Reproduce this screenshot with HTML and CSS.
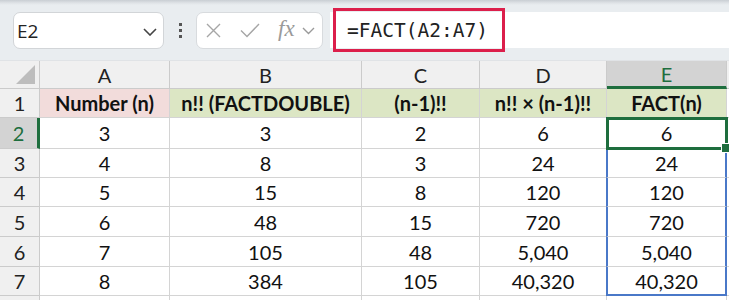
FILE: index.html
```html
<!DOCTYPE html>
<html>
<head>
  <meta charset="utf-8">
  <title>FACT</title>
  <link rel="stylesheet" href="styles.css">
</head>
<body>
  <div class="toolbar">
    <div class="namebox">
      <span>E2</span>
      <svg class="chev" width="14" height="8" viewBox="0 0 14 8"><path d="M1 1l6 6 6-6" fill="none" stroke="#444" stroke-width="1.6"/></svg>
    </div>
    <div class="grip"><i></i><i></i><i></i></div>
    <div class="fxbox">
      <svg width="15" height="15" viewBox="0 0 15 15"><path d="M1 1l13 13M14 1L1 14" stroke="#a6a6a6" stroke-width="1.4" fill="none"/></svg>
      <svg width="20" height="15" viewBox="0 0 20 15"><path d="M1 7.5l6 6L19 1" stroke="#a6a6a6" stroke-width="1.4" fill="none"/></svg>
      <span class="fx">fx</span>
      <svg width="13" height="8" viewBox="0 0 13 8"><path d="M1 1l5.5 5.5L12 1" fill="none" stroke="#9a9a9a" stroke-width="1.4"/></svg>
    </div>
    <div class="formula">
      <span class="highlight">=FACT(A2:A7)</span>
    </div>
  </div>

  <div class="sheet">
    <div class="corner"><span class="tri"></span></div>
    <div class="colh">A</div>
    <div class="colh">B</div>
    <div class="colh">C</div>
    <div class="colh">D</div>
    <div class="colh active">E</div>
    <div class="colh edge"></div>

    <div class="rowh">1</div>
    <div class="cell head pink">Number (n)</div>
    <div class="cell head green">n!! (FACTDOUBLE)</div>
    <div class="cell head green">(n-1)!!</div>
    <div class="cell head green">n!! × (n-1)!!</div>
    <div class="cell head green">FACT(n)</div>
    <div class="cell edge"></div>

    <div class="rowh active">2</div>
    <div class="cell">3</div><div class="cell">3</div><div class="cell">2</div><div class="cell">6</div><div class="cell sel">6</div><div class="cell edge"></div>

    <div class="rowh">3</div>
    <div class="cell">4</div><div class="cell">8</div><div class="cell">3</div><div class="cell">24</div><div class="cell spill">24</div><div class="cell edge"></div>

    <div class="rowh">4</div>
    <div class="cell">5</div><div class="cell">15</div><div class="cell">8</div><div class="cell">120</div><div class="cell spill">120</div><div class="cell edge"></div>

    <div class="rowh">5</div>
    <div class="cell">6</div><div class="cell">48</div><div class="cell">15</div><div class="cell">720</div><div class="cell spill">720</div><div class="cell edge"></div>

    <div class="rowh">6</div>
    <div class="cell">7</div><div class="cell">105</div><div class="cell">48</div><div class="cell">5,040</div><div class="cell spill">5,040</div><div class="cell edge"></div>

    <div class="rowh">7</div>
    <div class="cell">8</div><div class="cell">384</div><div class="cell">105</div><div class="cell">40,320</div><div class="cell spill last">40,320</div><div class="cell edge"></div>

    <div class="rowh"></div>
    <div class="cell"></div><div class="cell"></div><div class="cell"></div><div class="cell"></div><div class="cell"></div><div class="cell edge"></div>
  </div>
</body>
</html>
```

FILE: styles.css
```css
* { box-sizing: border-box; }
body {
  margin: 0;
  width: 729px;
  height: 300px;
  overflow: hidden;
  background: #fff;
  font-family: "Lato", "Noto Sans", sans-serif;
  color: #111;
}

/* formula bar */
.toolbar {
  height: 61px;
  display: flex;
  align-items: flex-start;
  padding-top: 12px;
  background: linear-gradient(#c9ced3 0, #dfe3e7 3px, #e9edf0 5px, #e9edf0 100%);
  border-bottom: 1px solid #e0e3e6;
}
.namebox {
  margin-left: 13px;
  width: 151px;
  height: 37px;
  background: #fff;
  border: 1px solid #d2d5d8;
  border-radius: 7px;
  display: flex;
  align-items: center;
  justify-content: space-between;
  padding: 0 6px 0 3px;
  font-family: "Open Sans", sans-serif;
  font-size: 19px;
  color: #222;
}
.namebox .chev { margin-top: 2px; }
.grip {
  width: 32px;
  height: 37px;
  display: flex;
  flex-direction: column;
  align-items: center;
  justify-content: center;
  gap: 3px;
}
.grip i {
  display: block;
  width: 3px;
  height: 3px;
  background: #555;
}
.fxbox {
  width: 127px;
  height: 37px;
  background: #fff;
  border: 1px solid #d8dbde;
  border-radius: 7px;
  display: flex;
  align-items: center;
  padding-left: 9px;
}
.fxbox svg:nth-child(1) { margin-right: 19px; }
.fxbox svg:nth-child(2) { margin-right: 18px; }
.fx {
  font-family: "Liberation Serif", serif;
  font-style: italic;
  font-size: 23px;
  color: #9a9a9a;
  margin-right: 7px;
  margin-top: -3px;
}
.formula {
  margin-left: 7px;
  flex: 1;
  height: 36px;
  background: #fff;
  display: flex;
  align-items: center;
}
.highlight {
  margin-left: 3px;
  height: 44px;
  width: 172px;
  border: 3px solid #dc1f4b;
  display: flex;
  align-items: center;
  padding-left: 11px;
  font-family: "DejaVu Sans Mono", monospace;
  font-size: 19.5px;
  color: #222;
}

/* grid */
.sheet {
  display: grid;
  grid-template-columns: 40px 130px 192px 118px 127px 120px 2px;
  grid-template-rows: 28px 29px 31px 29px 29px 30px 30px 29px 10px;
}
.corner, .colh, .rowh {
  background: #f0f0f0;
  border-right: 1px solid #cbcbcb;
  border-bottom: 1px solid #cbcbcb;
}
.corner {
  display: flex;
  align-items: flex-end;
  justify-content: flex-end;
  padding: 0 4px 4px 0;
}
.tri {
  width: 0;
  height: 0;
  border-left: 19px solid transparent;
  border-bottom: 19px solid #bdbdbd;
}
.colh, .rowh {
  display: flex;
  align-items: center;
  justify-content: center;
  font-size: 20px;
  color: #222;
}
.colh.active {
  background: #d3d3d3;
  color: #1e6e3e;
  border-bottom: 3px solid #1e6e3e;
}
.rowh.active {
  background: #d3d3d3;
  color: #1e6e3e;
  border-right: 3px solid #1e6e3e;
}
.cell {
  display: flex;
  align-items: center;
  justify-content: center;
  border-right: 1px solid #d4d4d4;
  border-bottom: 1px solid #d4d4d4;
  font-size: 20px;
  color: #111;
  white-space: nowrap;
}
.cell.edge, .colh.edge { border-right: 0; }
.head { font-weight: bold; }
.pink { background: #f2dcdb; }
.green { background: #dce6c4; }

/* active cell and spill range */
.sel {
  position: relative;
  z-index: 1;
  outline: 3px solid #1e6e3e;
  outline-offset: -2px;
}
.sel::after {
  content: "";
  position: absolute;
  right: -5px;
  bottom: -5px;
  width: 8px;
  height: 8px;
  background: #1e6e3e;
  border: 1px solid #fff;
}
.spill {
  border-left: 2px solid #4a78c8;
  border-right: 2px solid #4a78c8;
  margin-left: -1px;
}
.spill.last { border-bottom: 2px solid #4a78c8; }
```
